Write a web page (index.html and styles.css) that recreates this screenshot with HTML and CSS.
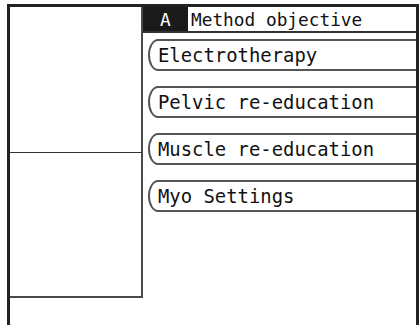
FILE: index.html
```html
<!DOCTYPE html>
<html lang="en">
  <head>
    <meta charset="utf-8">
    <title>Method objective</title>
    <link rel="stylesheet" href="styles.css">
  </head>
  <body>
    <div class="screen">
      <div class="side">
        <div class="side_top"></div>
        <div class="side_bottom"></div>
      </div>
      <div class="main">
        <div class="header">
          <span class="header_key">A</span>
          <span class="header_title">Method objective</span>
        </div>
        <ul class="menu">
          <li class="menu_item">Electrotherapy</li>
          <li class="menu_item">Pelvic re-education</li>
          <li class="menu_item">Muscle re-education</li>
          <li class="menu_item">Myo Settings</li>
        </ul>
      </div>
    </div>
  </body>
</html>
```

FILE: styles.css
```css
html {
  font-family: "DejaVu Sans Mono", "Liberation Mono", monospace;
}

body {
  margin: 0;
  background: #fff;
  height: 325px;
  overflow: hidden;
}

div.screen {
  margin: 4px 1px 0 7px;
  height: 330px;
  border: 3px solid #222;
  border-bottom: none;
  display: flex;
  overflow: hidden;
}

div.side {
  width: 133px;
  flex: none;
}

div.side_top {
  height: 145px;
  border-right: 2px solid #4a4a4a;
  border-bottom: 1px solid #333;
}

div.side_bottom {
  height: 143px;
  border-right: 2px solid #4a4a4a;
  border-bottom: 2px solid #4a4a4a;
}

div.main {
  flex: 1;
  min-width: 0;
}

div.header {
  display: flex;
  height: 24px;
  border-bottom: 2px solid #333;
  font-size: 17.8px;
  line-height: 26px;
}

span.header_key {
  width: 45px;
  background: #1a1a1a;
  color: #fff;
  padding-left: 17px;
  box-sizing: border-box;
}

span.header_title {
  padding-left: 3px;
  color: #111;
}

ul.menu {
  list-style: none;
  margin: 6px 0 0 5px;
  padding: 0;
  display: flex;
  flex-direction: column;
  gap: 15px;
}

li.menu_item {
  height: 28px;
  margin-right: -20px;
  border: 2px solid #555;
  border-radius: 10px 0 0 10px / 16px 0 0 16px;
  padding-left: 8px;
  font-size: 18.9px;
  line-height: 29px;
  color: #111;
}
```
